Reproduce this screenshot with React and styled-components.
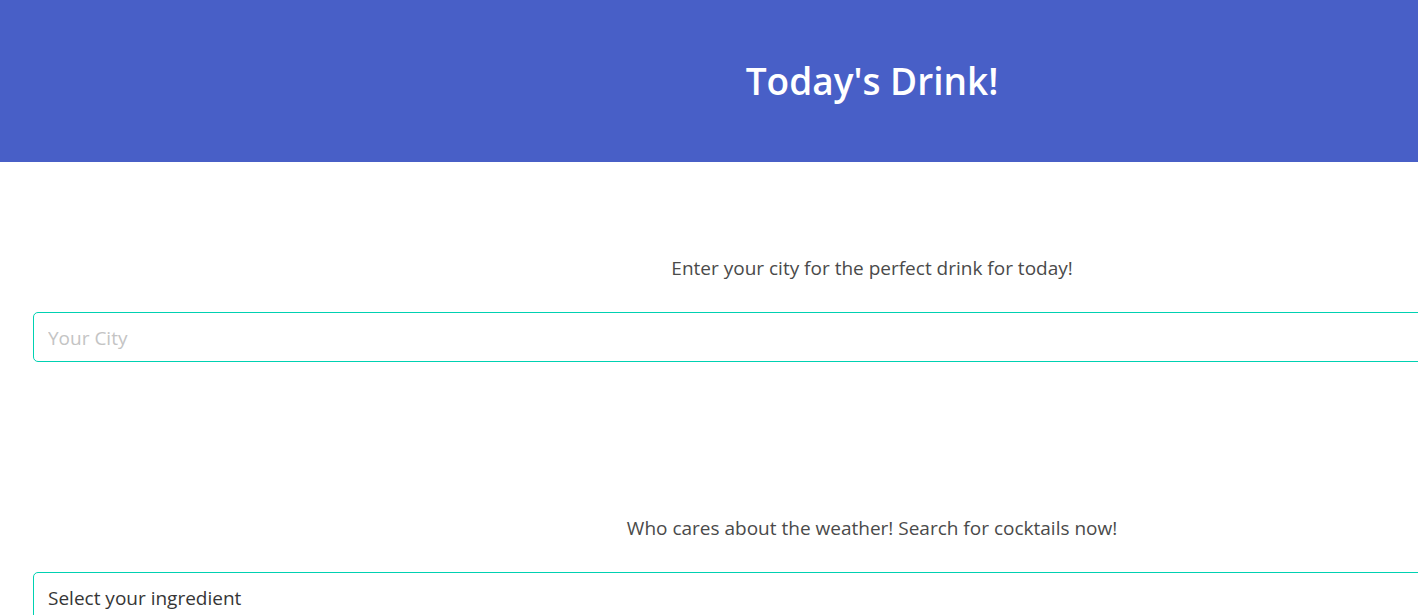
import React from "react";
import styled, { createGlobalStyle, css } from "styled-components";

const GlobalStyle = createGlobalStyle`
  *, *::before, *::after { box-sizing: border-box; }
  html { scrollbar-width: none; }
  body {
    margin: 0;
    background: #fff;
    color: #4a4a4a;
    font-family: "Segoe UI", "Open Sans", "Noto Sans", sans-serif;
    font-size: 19px;
    line-height: 28px;
  }
`;

/* The page is wider than the window and runs past its right edge. */
const Page = styled.div`
  width: 123%;
`;

const Hero = styled.header`
  display: flex;
  justify-content: center;
  padding: 57px 32px;
  background: #485fc7;
`;

const Title = styled.h1`
  margin: 0;
  color: #fff;
  font-size: 37px;
  font-weight: 600;
  line-height: 48px;
`;

const Section = styled.section`
  display: flex;
  flex-direction: column;
  gap: 30px;
  padding: 92px 33px 60px;
`;

const Prompt = styled.label`
  text-align: center;
`;

const field = css`
  width: 100%;
  height: 50px;
  margin: 0;
  padding: 2px 14px 0;
  border: 1px solid #00d1b2;
  border-radius: 5px;
  background: #fff;
  color: #363636;
  font: inherit;
  appearance: none;
`;

const TextField = styled.input`
  ${field}
  &::placeholder { color: #c4c4c4; opacity: 1; }
`;

const SelectField = styled.select`
  ${field}
`;

export default function App() {
  return (
    <>
      <GlobalStyle />
      <Page>
        <Hero>
          <Title>Today's Drink!</Title>
        </Hero>
        <main>
          <Section>
            <Prompt htmlFor="city">Enter your city for the perfect drink for today!</Prompt>
            <TextField id="city" type="text" placeholder="Your City" />
          </Section>
          <Section>
            <Prompt htmlFor="ingredient">Who cares about the weather! Search for cocktails now!</Prompt>
            <SelectField id="ingredient">
              <option>Select your ingredient</option>
            </SelectField>
          </Section>
        </main>
      </Page>
    </>
  );
}
